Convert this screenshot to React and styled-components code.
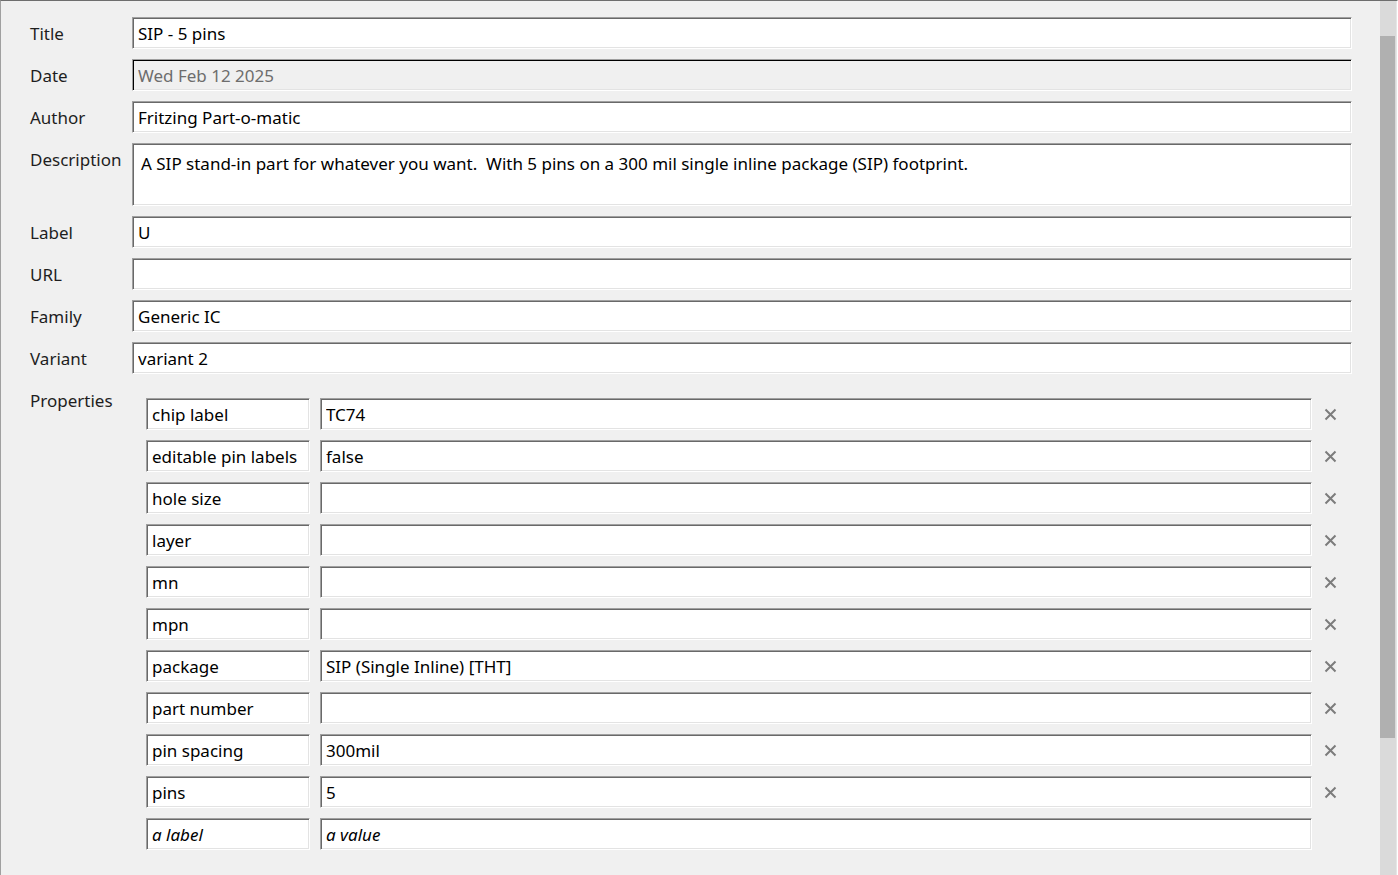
import React from "react";
import styled, { createGlobalStyle } from "styled-components";

const GlobalStyle = createGlobalStyle`
  html, body { margin: 0; padding: 0; background: #ffffff; }
  body { font-family: "Noto Sans", "Open Sans", sans-serif; }
  * { box-sizing: border-box; }
`;

const Window = styled.div`
  width: 1398px;
  height: 875px;
  display: flex;
  border-top: 1px solid #6e6e6e;
  border-left: 1px solid #a0a0a0;
  border-right: 1px solid #ffffff;
  overflow: hidden;
  background: #f0f0f0;
`;

const Content = styled.div`
  flex: 1;
  min-width: 0;
  padding: 16px 28px 0 29px;
  display: grid;
  grid-template-columns: 102px 1fr;
  grid-auto-rows: min-content;
  row-gap: 10px;
  font-size: 17px;
`;

const Label = styled.div`
  color: #1e1e1e;
  line-height: 22px;
  padding-top: 6px;
  white-space: nowrap;
`;

const fieldBorder = `
  border: 1px solid;
  border-color: #a0a0a0 #ffffff #ffffff #a0a0a0;
  box-shadow: inset 1px 1px 0 #696969, inset -1px -1px 0 #e3e3e3;
`;

const TextField = styled.input`
  ${fieldBorder}
  display: block;
  width: 100%;
  min-width: 0;
  height: 32px;
  margin: 0;
  padding: 0 4px 0 5px;
  font-family: inherit;
  font-size: 17px;
  font-style: ${(p) => (p.$italic ? "italic" : "normal")};
  color: #000;
  background: #ffffff;
  outline: none;
  &:disabled {
    background: #f0f0f0;
    color: #6d6d6d;
    box-shadow: inset 1px 1px 0 #000000, inset -1px -1px 0 #e3e3e3;
    -webkit-text-fill-color: #6d6d6d;
    opacity: 1;
  }
`;

const TextArea = styled.textarea`
  ${fieldBorder}
  display: block;
  width: 100%;
  height: 63px;
  margin: 0;
  padding: 9px 8px;
  resize: none;
  overflow: hidden;
  font-family: inherit;
  font-size: 17px;
  line-height: 22px;
  color: #000;
  background: #ffffff;
  outline: none;
`;

const Properties = styled.div`
  padding: 14px 0 0 14px;
  display: flex;
  flex-direction: column;
  gap: 10px;
`;

const PropRow = styled.div`
  display: grid;
  grid-template-columns: 164px 1fr 30px;
  column-gap: 10px;
  align-items: center;
`;

const RemoveButton = styled.button`
  width: 13px;
  height: 13px;
  margin: 0 0 0 2px;
  padding: 0;
  border: none;
  background: transparent;
  display: flex;
  align-items: center;
  justify-content: center;
  cursor: pointer;
  visibility: ${(p) => (p.$hidden ? "hidden" : "visible")};
`;

const ScrollTrack = styled.div`
  flex: 0 0 17px;
  width: 17px;
  background: #dadada;
  border-right: 1px solid #e6e6e6;
  padding: 35px 1px 0 0;
  display: flex;
  flex-direction: column;
`;

const ScrollThumb = styled.div`
  height: 702px;
  background: #b0b0b0;
`;

const CloseIcon = () => (
  <svg width="13" height="13" viewBox="0 0 13 13">
    <path d="M1.5 1.5 L11.5 11.5 M11.5 1.5 L1.5 11.5" stroke="#7c7c7c" strokeWidth="2" fill="none" />
  </svg>
);

const fields = [
  ["Title", "SIP - 5 pins"],
  ["Date", "Wed Feb 12 2025", true],
];
const fields2 = [
  ["Label", "U"],
  ["URL", ""],
  ["Family", "Generic IC"],
  ["Variant", "variant 2"],
];

const props = [
  ["chip label", "TC74"],
  ["editable pin labels", "false"],
  ["hole size", ""],
  ["layer", ""],
  ["mn", ""],
  ["mpn", ""],
  ["package", "SIP (Single Inline) [THT]"],
  ["part number", ""],
  ["pin spacing", "300mil"],
  ["pins", "5"],
];

export default function App() {
  return (
    <>
      <GlobalStyle />
      <Window>
        <Content>
          {fields.map(([l, v, dis]) => (
            <React.Fragment key={l}>
              <Label>{l}</Label>
              <TextField defaultValue={v} disabled={!!dis} />
            </React.Fragment>
          ))}
          <Label>Author</Label>
          <TextField defaultValue="Fritzing Part-o-matic" />
          <Label>Description</Label>
          <TextArea defaultValue="A SIP stand-in part for whatever you want.  With 5 pins on a 300 mil single inline package (SIP) footprint." />
          {fields2.map(([l, v]) => (
            <React.Fragment key={l}>
              <Label>{l}</Label>
              <TextField defaultValue={v} />
            </React.Fragment>
          ))}
          <Label>Properties</Label>
          <Properties>
            {props.map(([k, v]) => (
              <PropRow key={k}>
                <TextField defaultValue={k} />
                <TextField defaultValue={v} />
                <RemoveButton aria-label="remove">
                  <CloseIcon />
                </RemoveButton>
              </PropRow>
            ))}
            <PropRow>
              <TextField $italic defaultValue="a label" />
              <TextField $italic defaultValue="a value" />
              <RemoveButton $hidden aria-hidden="true" />
            </PropRow>
          </Properties>
        </Content>
        <ScrollTrack>
          <ScrollThumb />
        </ScrollTrack>
      </Window>
    </>
  );
}
